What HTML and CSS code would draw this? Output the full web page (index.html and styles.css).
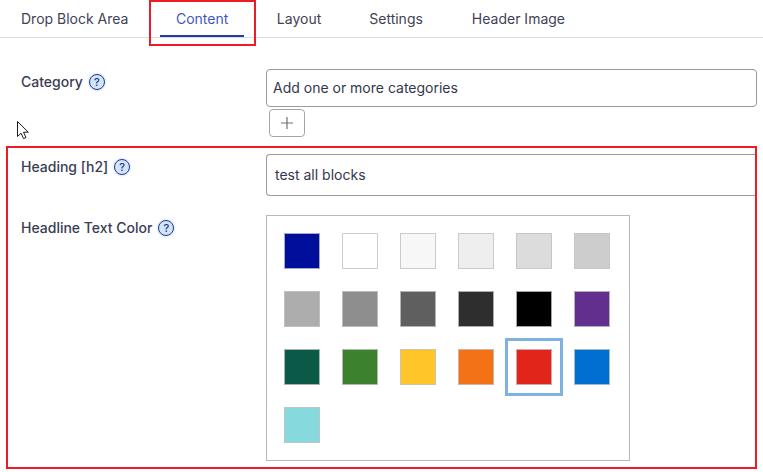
FILE: index.html
```html
<!DOCTYPE html>
<html lang="en">
<head>
<meta charset="utf-8">
<title>Content</title>
<link rel="stylesheet" href="styles.css">
</head>
<body>
<nav class="tabs">
  <a class="tab">Drop Block Area</a>
  <a class="tab tab-active">Content<span class="tab-callout"></span></a>
  <a class="tab">Layout</a>
  <a class="tab tab-settings">Settings</a>
  <a class="tab">Header Image</a>
</nav>
<main>
  <div class="row row-category">
    <div class="label"><span>Category</span><span class="help">?</span></div>
    <div class="control">
      <div class="input">Add one or more categories</div>
      <button class="add" aria-label="Add"><svg width="14" height="14" viewBox="0 0 14 14"><path d="M7 1v12M1 7h12" stroke="#6f7177" stroke-width="1.2" fill="none"/></svg></button>
    </div>
  </div>
  <section class="callout">
    <div class="row row-heading">
      <div class="label"><span>Heading [h2]</span><span class="help">?</span></div>
      <div class="input input-tall">test all blocks</div>
    </div>
    <div class="row row-color">
      <div class="label"><span>Headline Text Color</span><span class="help">?</span></div>
      <div class="palette">
        <div class="cell"><span class="swatch c-navy"></span></div>
        <div class="cell"><span class="swatch c-white"></span></div>
        <div class="cell"><span class="swatch c-g1"></span></div>
        <div class="cell"><span class="swatch c-g2"></span></div>
        <div class="cell"><span class="swatch c-g3"></span></div>
        <div class="cell"><span class="swatch c-g4"></span></div>
        <div class="cell"><span class="swatch c-g5"></span></div>
        <div class="cell"><span class="swatch c-g6"></span></div>
        <div class="cell"><span class="swatch c-g7"></span></div>
        <div class="cell"><span class="swatch c-g8"></span></div>
        <div class="cell"><span class="swatch c-black"></span></div>
        <div class="cell"><span class="swatch c-purple"></span></div>
        <div class="cell"><span class="swatch c-teal"></span></div>
        <div class="cell"><span class="swatch c-green"></span></div>
        <div class="cell"><span class="swatch c-yellow"></span></div>
        <div class="cell"><span class="swatch c-orange"></span></div>
        <div class="cell cell-selected"><span class="swatch c-red"></span></div>
        <div class="cell"><span class="swatch c-blue"></span></div>
        <div class="cell"><span class="swatch c-aqua"></span></div>
      </div>
    </div>
  </section>
</main>
<svg class="cursor" width="14" height="20" viewBox="0 0 14 20"><path d="M1.5 1.5V16.5L5 13.2L7.6 18.6L10 17.5L7.5 12.2H12.3Z" fill="#fff" stroke="#1a1a1a" stroke-width="1"/></svg>
</body>
</html>
```
FILE: styles.css
```css
* { box-sizing: border-box; }
html, body { margin: 0; padding: 0; }
body {
  position: relative;
  width: 763px;
  height: 472px;
  overflow: hidden;
  background: #fff;
  font-family: Inter, "Liberation Sans", sans-serif;
  font-size: 14px;
  color: #34374c;
}
.tabs {
  display: flex;
  gap: 16px;
  height: 38px;
  padding-left: 5px;
  border-bottom: 1px solid #dcdcdc;
}
.tab {
  position: relative;
  height: 37px;
  padding: 11px 16px 0;
  line-height: 16px;
  color: #3f4254;
}
.tab-settings { margin-right: 1px; }
.tab-active {
  margin-right: 1px;
  padding-left: 15.5px;
  padding-right: 15.5px;
  color: #3f58c4;
  border-bottom: 2px solid #1d3fa6;
}
.tab-callout {
  position: absolute;
  left: -11px;
  top: 0;
  width: 107px;
  height: 46px;
  border: 2px solid #ed1c24;
}
.row {
  display: grid;
  grid-template-columns: 245px 1fr;
}
.row-category {
  padding: 31px 6px 0 21px;
  height: 108px;
}
.label {
  display: flex;
  align-items: center;
  gap: 6px;
  height: 20px;
  line-height: 20px;
  font-weight: 500;
  color: #3a3d52;
}
.row-category .label { margin-top: 3px; }
.help {
  display: flex;
  align-items: center;
  justify-content: center;
  width: 16px;
  height: 16px;
  border: 1.4px solid #1f3a8c;
  border-radius: 50%;
  background: #d3e3f8;
  box-shadow: 0 0 0 1.5px #e6effb;
  font-size: 11px;
  line-height: 1;
  color: #1f3a8c;
}
.input {
  display: flex;
  align-items: center;
  height: 38px;
  padding: 0 0 2px 6px;
  border: 1px solid #9a9a9a;
  border-radius: 4px;
  background: #fff;
}
.input-tall {
  height: 42px;
  padding-left: 8px;
  border-right: 0;
  border-radius: 4px 0 0 4px;
}
.add {
  display: flex;
  align-items: center;
  justify-content: center;
  width: 36px;
  height: 28px;
  margin: 2px 0 0 3px;
  padding: 0;
  border: 1px solid #a5a5a5;
  border-radius: 4px;
  background: #fff;
}
.callout {
  width: 751px;
  height: 323px;
  margin-left: 6px;
  border: 2px solid #ed1c24;
}
.callout .row { padding-left: 13px; }
.row-heading { padding-top: 6px; height: 67px; }
.row-heading .label { margin-top: 3px; }
.row-color .label { margin-top: 3px; }
.palette {
  display: grid;
  grid-template-columns: repeat(6, 58px);
  grid-auto-rows: 58px;
  width: 364px;
  height: 246px;
  padding: 6px;
  border: 1px solid #b8b8b8;
}
.cell {
  display: flex;
  align-items: center;
  justify-content: center;
}
.cell-selected { border: 3px solid #7fb1e2; }
.swatch {
  display: block;
  width: 36px;
  height: 36px;
  border: 1px solid rgba(195, 195, 195, .85);
}
.c-navy { background: #000e9c; }
.c-white { background: #fff; }
.c-g1 { background: #f7f7f7; }
.c-g2 { background: #eee; }
.c-g3 { background: #dcdcdc; }
.c-g4 { background: #cdcdcd; }
.c-g5 { background: #adadad; }
.c-g6 { background: #8e8e8e; }
.c-g7 { background: #5f5f5f; }
.c-g8 { background: #2e2e2e; }
.c-black { background: #000; }
.c-purple { background: #632f8f; }
.c-teal { background: #0b5a47; }
.c-green { background: #3c812d; }
.c-yellow { background: #ffc529; }
.c-orange { background: #f47216; }
.c-red { background: #e1251b; }
.c-blue { background: #0070d0; }
.c-aqua { background: #86dade; }
.cursor {
  position: absolute;
  left: 16px;
  top: 120px;
}
```
